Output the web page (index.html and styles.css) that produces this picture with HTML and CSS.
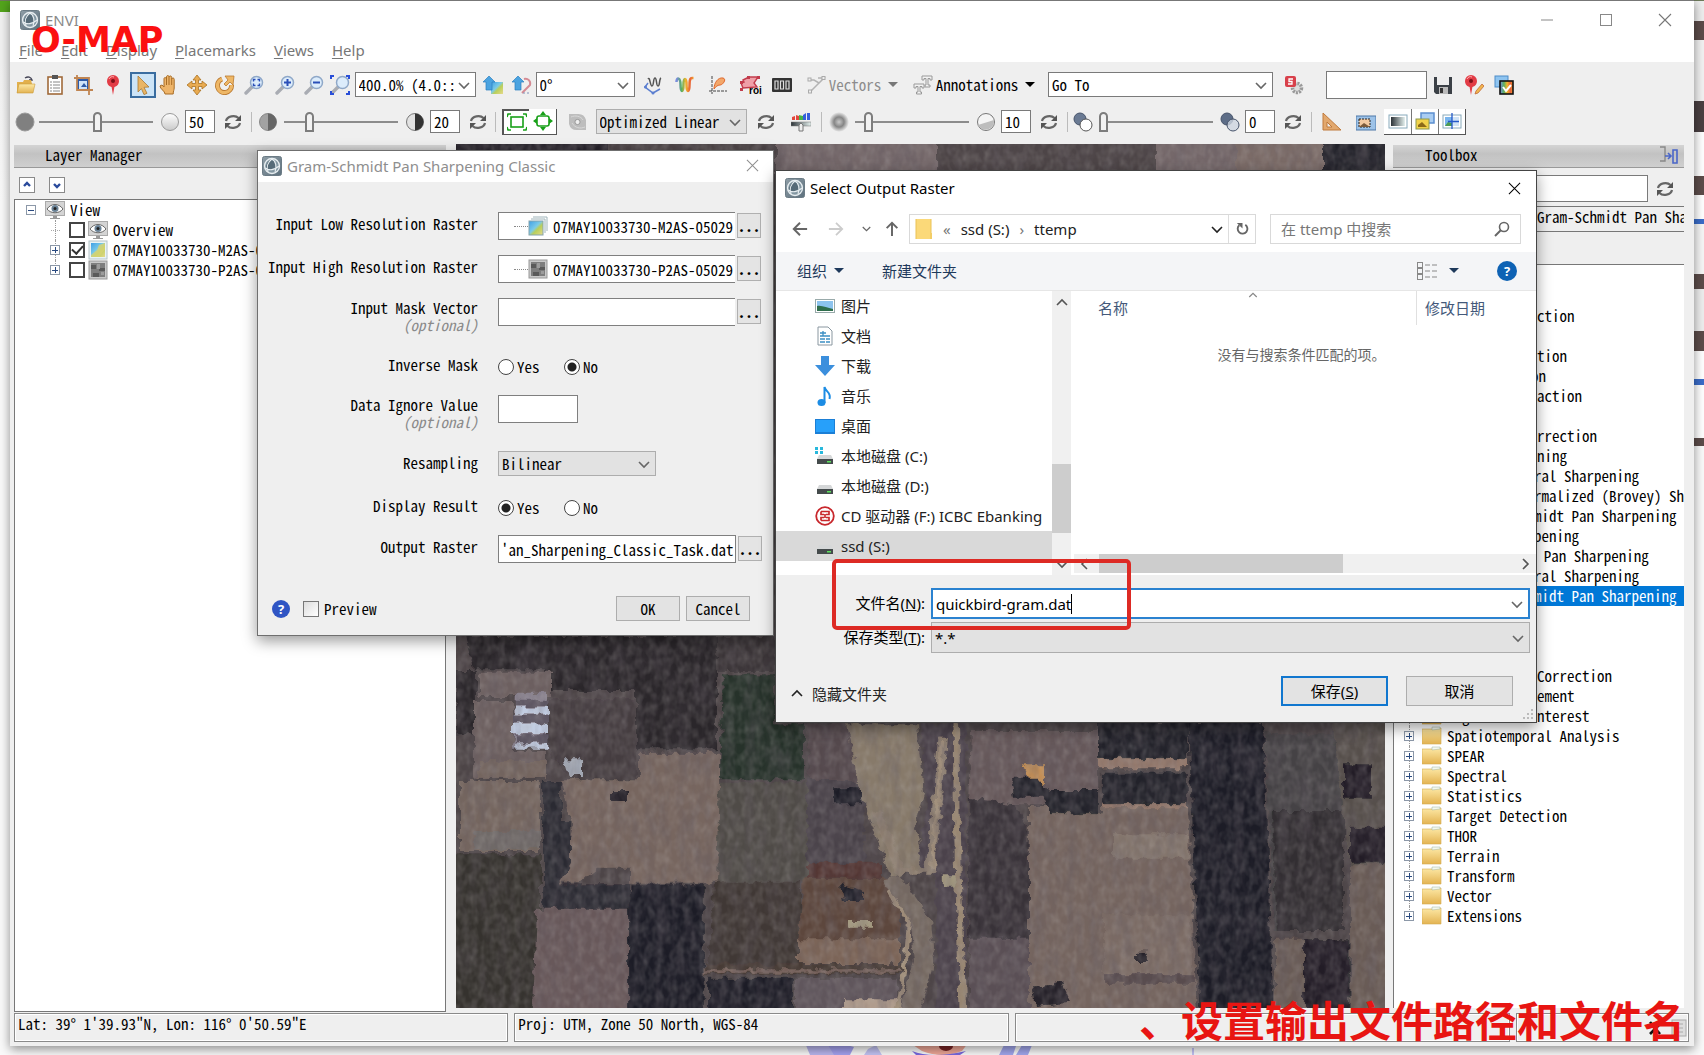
FILE: index.html
```html
<!DOCTYPE html>
<html lang="zh-CN">
<head>
<meta charset="utf-8">
<title>ENVI</title>
<link rel="stylesheet" href="styles.css">
</head>
<body>
<svg class="sprite" aria-hidden="true">
  <defs>
    <linearGradient id="gGlass" x1="0" y1="0" x2="1" y2="1"><stop offset="0" stop-color="#8e9da6"/><stop offset="1" stop-color="#5d707d"/></linearGradient>
    <linearGradient id="gFolder" x1="0" y1="0" x2="0" y2="1"><stop offset="0" stop-color="#fde9a6"/><stop offset="1" stop-color="#e3b352"/></linearGradient>
    <linearGradient id="gSky" x1="0" y1="0" x2="1" y2="1"><stop offset="0" stop-color="#3fa0e6"/><stop offset=".45" stop-color="#7ccbe8"/><stop offset=".6" stop-color="#b9cf5a"/><stop offset="1" stop-color="#e6d98b"/></linearGradient>
    <linearGradient id="gGrey" x1="0" y1="0" x2="1" y2="0"><stop offset="0" stop-color="#2c3338"/><stop offset="1" stop-color="#e4f0ee"/></linearGradient>
    <linearGradient id="gRain" x1="0" y1="0" x2="1" y2="0"><stop offset="0" stop-color="#e33b2e"/><stop offset=".35" stop-color="#f2b52d"/><stop offset=".6" stop-color="#4cb648"/><stop offset="1" stop-color="#2f5fd0"/></linearGradient>
    <linearGradient id="gWave" x1="0" y1="0" x2="1" y2="0"><stop offset="0" stop-color="#7a8ce0"/><stop offset=".3" stop-color="#58b060"/><stop offset=".55" stop-color="#f2b52d"/><stop offset=".8" stop-color="#e8603a"/><stop offset="1" stop-color="#f3a12d"/></linearGradient>
    <radialGradient id="gSoft"><stop offset="0" stop-color="#c9c9c9"/><stop offset=".5" stop-color="#858585"/><stop offset="1" stop-color="#efefef"/></radialGradient>
    <linearGradient id="gBall" x1="0" y1="0" x2="0" y2="1"><stop offset="0" stop-color="#fff"/><stop offset="1" stop-color="#c9c9c9"/></linearGradient>
  </defs>
  <symbol id="logo" viewBox="0 0 20 20"><rect x=".5" y=".5" width="19" height="19" rx="2" fill="url(#gGlass)" stroke="#6b7b85"/><circle cx="10" cy="10" r="7.500" fill="#8397a2" stroke="#e8eef1" stroke-width="1.300"/><path d="M4 12c0-4 2-7 5-8l3 1 2 6c-3 2-7 3-10 1z" fill="#566b78"/><path d="M3 12c4 3 10 2 14-2M10 3c4 2 5 8 3 13M6 16c-2-5 0-10 4-13" fill="none" stroke="#e8eef1" stroke-width="1.100"/></symbol>
  <symbol id="open" viewBox="0 0 20 20"><path d="M9 3c3-2 6-1 7 2l-3 0" fill="none" stroke="#445" stroke-width="1.400"/><path d="M1 7h6l1-2h7l1 4v9H1z" fill="#e2b04c"/><path d="M3 9h16l-2 9H1z" fill="url(#gFolder)" stroke="#c99a3a" stroke-width=".6"/></symbol>
  <symbol id="clip" viewBox="0 0 20 20"><rect x="3" y="2" width="14" height="17" fill="#fff" stroke="#a06a3a" stroke-width="1.600"/><rect x="7" y="0" width="6" height="4" fill="#555"/><path d="M5 7h2M8 7h7M5 10h2M8 10h7M5 13h2M8 13h7M5 16h2M8 16h7" stroke="#888"/></symbol>
  <symbol id="crop" viewBox="0 0 20 20"><rect x="5" y="5" width="10" height="10" fill="#cfe4fb" stroke="#2d5aa8" stroke-width="2"/><path d="M4 0v15h16M1 3h15v17" fill="none" stroke="#c08552" stroke-width="1.800"/><path d="M8 12l3-4 3 4z" fill="#2d5aa8"/></symbol>
  <symbol id="pin" viewBox="0 0 20 20"><path d="M10 20L8.600 12C5 11 4 8 4 6a6 6 0 0 1 12 0c0 2-1 5-4.600 6z" fill="#e23c46"/><circle cx="10" cy="6" r="2" fill="#7c1018"/><path d="M6 4c1-2 3-3 5-2" stroke="#ffb3b3" fill="none"/></symbol>
  <symbol id="cursor" viewBox="0 0 20 20"><path d="M5 1l11 11-5 .3 3 6-3 1.300-2.600-6L5 17z" fill="#e9b565" stroke="#a97a34" stroke-width=".8"/></symbol>
  <symbol id="hand" viewBox="0 0 20 20"><path d="M6 19c0-3-5-5-5-8 1-1.500 3-1 4 1V4c0-2 2-2 2.500 0V2c0-2 2.500-2 2.500 0v0c.3-1.500 2.700-1.500 2.700.5V4c.5-1.500 2.500-1.500 2.500.5V13c0 2-1 3-1 6z" fill="#eeb469" stroke="#a86d26"/><path d="M7.500 4v6M10 2v8M12.700 4v6" stroke="#a86d26"/></symbol>
  <symbol id="move" viewBox="0 0 20 20"><path d="M10 0l4 5h-2.500v3.500H15V6l5 4-5 4v-2.500h-3.500V15H14l-4 5-4-5h2.500v-3.500H5V14l-5-4 5-4v2.500h3.500V5H6z" fill="#e9ab51" stroke="#a97224" stroke-width=".8"/></symbol>
  <symbol id="rotate" viewBox="0 0 20 20"><path d="M7 4A7 7 0 1 0 16.500 10" fill="none" stroke="#b9782f" stroke-width="5"/><path d="M7 4A7 7 0 1 0 16.500 10" fill="none" stroke="#eeb766" stroke-width="3.400"/><path d="M10 1l9 0-1 9-3-3-4 4-2-2 4-4z" fill="#eeb766" stroke="#b9782f" stroke-width=".8"/></symbol>
  <symbol id="lens" viewBox="0 0 20 20"><path d="M8 12l-6 6" stroke="#a9acb3" stroke-width="3.400" stroke-linecap="round"/><circle cx="12.500" cy="7.500" r="6" fill="#dcecfb" stroke="#8fa8c8" stroke-width="1.500"/></symbol>
  <symbol id="zoombox" viewBox="0 0 20 20"><use href="#lens"/><path d="M9.500 6.500v-2h2M13.500 4.500h2v2M15.500 8.500v2h-2M11.500 10.500h-2v-2" fill="none" stroke="#2a4fb8" stroke-width="1.400"/></symbol>
  <symbol id="zoomin" viewBox="0 0 20 20"><use href="#lens"/><path d="M9 7.500h7M12.500 4v7" stroke="#2a4fb8" stroke-width="2"/></symbol>
  <symbol id="zoomout" viewBox="0 0 20 20"><use href="#lens"/><path d="M9 7.500h7" stroke="#2a4fb8" stroke-width="2"/></symbol>
  <symbol id="zoomfit" viewBox="0 0 20 20"><use href="#lens"/><path d="M1 4V1h3M16 1h3v3M19 16v3h-3M4 19H1v-3" fill="none" stroke="#2a4fd8" stroke-width="2"/></symbol>
  <symbol id="upimg" viewBox="0 0 20 20"><rect x="8" y="7" width="12" height="12" fill="url(#gSky)"/><path d="M6 1l6 6H9v8H3V7H0z" fill="#4ba3e0" stroke="#2c7fc0" stroke-width=".7"/></symbol>
  <symbol id="uprot" viewBox="0 0 20 20"><path d="M12 4c4-1 7 2 6 6l-4 4M18 10l-8 8" fill="none" stroke="#d58b94" stroke-width="2"/><path d="M11 18h8" stroke="#7f92b8" stroke-dasharray="2"/><path d="M6 1l6 6H9v8H3V7H0z" fill="#4ba3e0" stroke="#2c7fc0" stroke-width=".7"/></symbol>
  <symbol id="profile" viewBox="0 0 20 20"><path d="M5 8l-3 4 8 6 7-4" fill="none" stroke="#5c7fd0" stroke-width="1.500"/><circle cx="2.500" cy="12" r="1.500" fill="#5c7fd0"/><circle cx="10" cy="18" r="1.500" fill="#5c7fd0"/><path d="M5 4c2-3 2 7 4 7s1-8 3-8 1 8 3 8 1-7 3-8" fill="none" stroke="#555" stroke-width="1.500"/></symbol>
  <symbol id="spectral" viewBox="0 0 20 20"><path d="M1.500 7c0-5 4-5 4 3s3 8 3 0 3-8 3 0 3 8 3 0 2-7 4-7" fill="none" stroke="url(#gWave)" stroke-width="2.500"/></symbol>
  <symbol id="scatter" viewBox="0 0 20 20"><path d="M4 1v18M1 16h18" stroke="#444" stroke-dasharray="3 1"/><path d="M6 14c0-6 4-12 9-11 4 1 0 7-3 7s-4 2-6 4z" fill="#f3a76a" stroke="#e0682c"/></symbol>
  <symbol id="roi" viewBox="0 0 24 20"><path d="M5 5l6-3h9l-4 6 3 4-14 1-2-5 3-1z" fill="#efa0a8" stroke="#c23c4c" stroke-width="1.400"/><g fill="#c23c4c"><rect x="9" y="1" width="3" height="3"/><rect x="19" y="1" width="3" height="3"/><rect x="2" y="13" width="3" height="3"/><rect x="2" y="6" width="3" height="3"/></g><text x="11" y="19" class="roi-text">roi</text></symbol>
  <symbol id="barcode" viewBox="0 0 20 20"><rect x="0" y="3" width="20" height="14" rx="1" fill="#333"/><path d="M3 6h3v8H3zM8.500 6h3v8h-3zM14 6h3v8h-3z" fill="none" stroke="#ddd" stroke-width="1.200"/></symbol>
  <symbol id="vector" viewBox="0 0 20 20"><path d="M4 5h4l5 3 5-5h-6M13 8l-9 9" fill="none" stroke="#b3b3b3" stroke-width="1.500"/><g fill="#eee" stroke="#aaa"><rect x="2" y="3" width="3" height="3"/><rect x="16" y="1.500" width="3" height="3"/><rect x="2.500" y="15" width="3" height="3"/></g></symbol>
  <symbol id="annot" viewBox="0 0 20 20"><g fill="#f2f2f2" stroke="#999"><path d="M9 1h10v4h-2V3.500h-2V10h2v2h-5v-2h1V3.500h-2V5H9z"/><path d="M1 9h10v4H9v-1.500H7V17h1.500v2h-5v-2H5v-5.500H3V13H1z"/></g></symbol>
  <symbol id="sgear" viewBox="0 0 20 20"><circle cx="13" cy="13" r="4.500" fill="#ddd" stroke="#999" stroke-width="3.500" stroke-dasharray="2 1"/><rect x="1" y="1" width="11" height="11" rx="2" fill="#d8404b"/><path d="M9 4H5v2.500h3V9H4" fill="none" stroke="#fff" stroke-width="1.300"/></symbol>
  <symbol id="save" viewBox="0 0 20 20"><path d="M1 2h18v17H3l-2-2z" fill="#3b4046"/><rect x="4" y="2" width="12" height="8" fill="#eee"/><rect x="6" y="12" width="9" height="7" fill="#bbb"/><rect x="7" y="13" width="3" height="5" fill="#333"/></symbol>
  <symbol id="pinedit" viewBox="0 0 20 20"><use href="#pin" x="-3"/><path d="M18 9l-6 7-1 3 3-1 6-7z" fill="#f1b64d" stroke="#c26a3a" stroke-width=".8"/></symbol>
  <symbol id="layers" viewBox="0 0 20 20"><rect x="1" y="1" width="13" height="11" fill="#8ec4f0" stroke="#4d8cc8"/><rect x="6" y="6" width="13" height="13" fill="url(#gWave)" stroke="#111" stroke-width="1.600"/><path d="M9 12l3 4 5-6" stroke="#fff" stroke-width="2" fill="none"/></symbol>
  <symbol id="refresh" viewBox="0 0 20 20"><path d="M3 9c1-5 9-6.500 12.500-3M17 11c-1 5-9 6.500-12.500 3" fill="none" stroke="#666" stroke-width="2.200"/><path d="M18 3v6h-6zM2 17v-6h6z" fill="#555"/></symbol>
  <symbol id="dark" viewBox="0 0 20 20"><circle cx="10" cy="10" r="9" fill="#808080" stroke="#9a9a9a"/></symbol>
  <symbol id="light" viewBox="0 0 20 20"><circle cx="10" cy="10" r="8.500" fill="url(#gBall)" stroke="#999"/></symbol>
  <symbol id="half1" viewBox="0 0 20 20"><circle cx="10" cy="10" r="8.500" fill="#a2a2a2" stroke="#888"/><path d="M10 1.500a8.500 8.500 0 0 1 0 17z" fill="#666"/></symbol>
  <symbol id="half2" viewBox="0 0 20 20"><circle cx="10" cy="10" r="8.500" fill="#e2e2e2" stroke="#777"/><path d="M10 1.500a8.500 8.500 0 0 1 0 17z" fill="#333"/></symbol>
  <symbol id="soft" viewBox="0 0 20 20"><circle cx="10" cy="10" r="10" fill="url(#gSoft)"/></symbol>
  <symbol id="sharp" viewBox="0 0 20 20"><circle cx="10" cy="10" r="8.500" fill="#f4f4f4" stroke="#777"/><path d="M2 13L18 8a8.500 8.500 0 0 1-16 5z" fill="#bdbdbd"/></symbol>
  <symbol id="trans1" viewBox="0 0 20 20"><circle cx="7" cy="7" r="6" fill="#6a7a93" stroke="#46536a"/><circle cx="13" cy="13" r="6" fill="#fff" stroke="#555"/></symbol>
  <symbol id="trans2" viewBox="0 0 20 20"><circle cx="7" cy="7" r="6" fill="#5d6d87" stroke="#46536a"/><circle cx="13" cy="13" r="6" fill="#cdd5e0" fill-opacity=".8" stroke="#46536a"/></symbol>
  <symbol id="ext1" viewBox="0 0 20 20"><rect x="4" y="5" width="12" height="10" fill="none" stroke="#18a018" stroke-width="1.600"/><path d="M0 5l1-3h3M16 2h3l1 3M20 15l-1 3h-3M4 18H1l-1-3" fill="none" stroke="#18a018" stroke-width="1.600"/></symbol>
  <symbol id="ext2" viewBox="0 0 20 20"><rect x="4" y="5" width="12" height="10" rx="2" fill="none" stroke="#18a018" stroke-width="1.600"/><path d="M10 0l3 4H7zM10 20l3-4H7zM0 10l4-3v6zM20 10l-4-3v6z" fill="#18a018"/></symbol>
  <symbol id="disc" viewBox="0 0 20 20"><path d="M1 2h9a8 8 0 0 1 8 6v10h-9a8 8 0 0 1-8-6z" fill="#bdbdbd"/><path d="M3 5c4-2 10-1 12 3M17 15c-5 2-10 1-13-4" fill="none" stroke="#d8d8d8"/><circle cx="9.500" cy="10" r="2.600" fill="#eee" stroke="#999"/></symbol>
  <symbol id="hist" viewBox="0 0 20 20"><path d="M1 8V5l3-1v4zM5 8V3l3 1v4z" fill="#e2463c"/><path d="M8 8V3l4 1v4z" fill="#45b348"/><path d="M12 8V3l3-2v7zM16 8V1h3v7z" fill="#365fdc"/><rect x="0" y="10" width="20" height="4" fill="url(#gGrey)" stroke="#777" stroke-width=".5"/><path d="M8 13l2-2 2 2v6H8z" fill="#eee" stroke="#777"/></symbol>
  <symbol id="ruler" viewBox="0 0 20 20"><path d="M1 1l18 17H1z" fill="#e2a86e" stroke="#c07a3c"/><path d="M5 10l5 5H5z" fill="#efefef" stroke="#c07a3c"/></symbol>
  <symbol id="window" viewBox="0 0 20 20"><rect x="0" y="4" width="20" height="14" fill="#9cc2e8" stroke="#4f78a8"/><rect x="3" y="7" width="11" height="8" fill="#f3c9a0" stroke="#222" stroke-dasharray="2 1"/><path d="M3 15l5-4 6 4z" fill="#7c5a3a"/></symbol>
  <symbol id="blend" viewBox="0 0 20 20"><rect x="1" y="4" width="18" height="13" fill="#fff" stroke="#8ab"/><rect x="3" y="6" width="14" height="9" fill="url(#gGrey)"/></symbol>
  <symbol id="flicker" viewBox="0 0 20 20"><rect x="6" y="2" width="13" height="10" fill="#a9cdf3" stroke="#5c8fd0" stroke-width="1.500"/><rect x="1" y="8" width="13" height="10" fill="#f2d24a" stroke="#8c9a50"/><path d="M3 14l4-3 5 5H3z" fill="#8c6a18"/></symbol>
  <symbol id="swipe" viewBox="0 0 20 20"><rect x="1" y="4" width="18" height="13" fill="#fff" stroke="#8ab"/><rect x="3" y="6" width="7" height="9" fill="#79b5ee"/><path d="M3 15l3-4 4 1v3z" fill="#4c9b51"/><rect x="10" y="6" width="7" height="9" fill="#cfe2f5"/><path d="M10 2v16M6 10.500h11" stroke="#2458c8" stroke-width="1.300"/></symbol>
  <symbol id="eye" viewBox="0 0 20 20"><rect x=".5" y="1.500" width="19" height="14" fill="#d4d4d4" stroke="#aaa"/><path d="M2 9c4-6 12-6 16 0-4 5-12 5-16 0z" fill="#fff" stroke="#666"/><circle cx="10" cy="8.500" r="3.500" fill="#6a8296"/><circle cx="10" cy="8.500" r="1.500" fill="#222"/><path d="M8 16h4v2h3v1H5v-1h3z" fill="#999"/></symbol>
  <symbol id="rast" viewBox="0 0 20 20"><rect x="1" y="1" width="18" height="18" fill="#e9f3f5" stroke="#b5c4c8"/><rect x="3" y="3" width="14" height="14" fill="url(#gSky)"/><path d="M3 15l6-5 2-5 6-2v6l-6 8H3z" fill="#d7d374" opacity=".8"/></symbol>
  <symbol id="rasts" viewBox="0 0 20 20"><path d="M5 1h14v14M3 3h14v14" fill="none" stroke="#9fb4ba"/><rect x="1" y="5" width="14" height="14" fill="url(#gSky)" stroke="#86a4ad"/></symbol>
  <symbol id="grast" viewBox="0 0 20 20"><rect x="1" y="1" width="18" height="18" fill="#c9c9c9" stroke="#999"/><rect x="3" y="3" width="14" height="14" fill="#7e7e7e"/><path d="M3 5h5v4H3zM11 8h6v3h-6zM5 13h6v4H5z" fill="#5a5a5a"/><path d="M9 4h3v5H9zM13 12h3v3h-3z" fill="#9c9c9c"/></symbol>
  <symbol id="folder" viewBox="0 0 20 20"><path d="M0 3h11l1-1h7v16H0z" fill="url(#gFolder)" stroke="#d5ac52" stroke-width=".6"/><path d="M10 1h8v2l-8 1z" fill="#f4f8ee" stroke="#9fb2a2" stroke-width=".5"/></symbol>
  <symbol id="chev" viewBox="0 0 12 12"><path d="M1 4l5 5 5-5" fill="none" stroke="currentColor" stroke-width="1.600"/></symbol>
  <symbol id="cross" viewBox="0 0 14 14"><path d="M1 1l12 12M13 1L1 13" stroke="currentColor" stroke-width="1.100"/></symbol>
  <symbol id="arrow" viewBox="0 0 18 18"><path d="M17 9H2M9 2L2 9l7 7" fill="none" stroke="currentColor" stroke-width="2.200"/></symbol>
  <symbol id="arrowr" viewBox="0 0 18 18"><path d="M1 9h15M9 2l7 7-7 7" fill="none" stroke="currentColor" stroke-width="2"/></symbol>
  <symbol id="arrowu" viewBox="0 0 18 18"><path d="M9 17V2M3 8l6-6 6 6" fill="none" stroke="currentColor" stroke-width="2.200"/></symbol>
  <symbol id="drive" viewBox="0 0 20 20"><path d="M4 9h12l2 4H2z" fill="#d5d7d8"/><rect x="2" y="13" width="16" height="5" fill="#454b4c"/><rect x="12" y="15" width="4" height="1.500" fill="#5de05d"/></symbol>
</svg>

<div class="desktop" aria-hidden="true">
  <div class="peek"></div>
  <svg class="doodle" viewBox="0 0 400 12"><path d="M5 0h28l12 12H10z" fill="#b9b6ee"/><path d="M28 2l12-2 14 4-4 8H34z" fill="#a5a2f0"/><path d="M68 6l8-4 6 10H64z" fill="#c4c4f4"/><path d="M110 0h58l-6 8q-20 8-40 0z" fill="#f0a898"/><ellipse cx="146" cy="3" rx="7" ry="5" fill="#7a2424"/><path d="M112 8q20 8 54 0l-6 4h-44z" fill="#7a6ae0"/><path d="M205 0h12l-4 12h-14zM222 2h10l-4 10h-12z" fill="#a3a8ee"/><path d="M393 5v7" stroke="#8a8af0"/></svg>
</div>

<main class="app">
  <header class="titlebar">
    <svg class="i20"><use href="#logo"/></svg><span class="title">ENVI</span>
    <div class="winbtns">
      <button aria-label="Minimize"><svg viewBox="0 0 14 14"><path d="M1 7h12" stroke="#888"/></svg></button>
      <button aria-label="Maximize"><svg viewBox="0 0 14 14"><rect x="1.500" y="1.500" width="11" height="11" fill="none" stroke="#888"/></svg></button>
      <button aria-label="Close window"><svg><use href="#cross"/></svg></button>
    </div>
  </header>
  <nav class="menu">
    <a href="#file"><u>F</u>ile</a><a href="#edit"><u>E</u>dit</a><a href="#display"><u>D</u>isplay</a><a href="#placemarks"><u>P</u>lacemarks</a><a href="#views"><u>V</u>iews</a><a href="#help"><u>H</u>elp</a>
  </nav>

  <section class="bars">
    <div class="bar bar1">
      <button aria-label="Open"><svg><use href="#open"/></svg></button>
      <button aria-label="Data Manager"><svg><use href="#clip"/></svg></button>
      <button aria-label="Crop"><svg><use href="#crop"/></svg></button>
      <button aria-label="Placemark"><svg><use href="#pin"/></svg></button>
      <button aria-label="Select" class="active"><svg><use href="#cursor"/></svg></button>
      <button aria-label="Pan"><svg><use href="#hand"/></svg></button>
      <button aria-label="Fly"><svg><use href="#move"/></svg></button>
      <button aria-label="Rotate"><svg><use href="#rotate"/></svg></button>
      <button aria-label="Zoom"><svg><use href="#zoombox"/></svg></button>
      <button aria-label="Zoom in"><svg><use href="#zoomin"/></svg></button>
      <button aria-label="Zoom out"><svg><use href="#zoomout"/></svg></button>
      <button aria-label="Zoom to full extent"><svg><use href="#zoomfit"/></svg></button>
      <span class="combo w-zoom"><select aria-label="Zoom factor"><option>400.0% (4.0::</option></select><svg><use href="#chev"/></svg></span>
      <button aria-label="North up"><svg><use href="#upimg"/></svg></button>
      <button aria-label="Rotate up"><svg><use href="#uprot"/></svg></button>
      <span class="combo w-rot"><select aria-label="Rotation"><option>0°</option></select><svg><use href="#chev"/></svg></span>
      <button aria-label="Arbitrary profile"><svg><use href="#profile"/></svg></button>
      <button aria-label="Spectral profile"><svg><use href="#spectral"/></svg></button>
      <button aria-label="Scatter plot"><svg><use href="#scatter"/></svg></button>
      <button aria-label="Region of interest"><svg class="wide"><use href="#roi"/></svg></button>
      <button aria-label="Feature counting"><svg><use href="#barcode"/></svg></button>
      <button class="drop off"><svg><use href="#vector"/></svg>Vectors<i></i></button>
      <button class="drop"><svg><use href="#annot"/></svg>Annotations<i></i></button>
      <span class="combo w-goto"><select aria-label="Go To"><option>Go To</option></select><svg><use href="#chev"/></svg></span>
      <button aria-label="Settings"><svg><use href="#sgear"/></svg></button>
      <input class="name" type="text" aria-label="Name">
      <button aria-label="Save"><svg><use href="#save"/></svg></button>
      <button aria-label="Edit placemark"><svg><use href="#pinedit"/></svg></button>
      <button aria-label="Chip view"><svg><use href="#layers"/></svg></button>
    </div>
    <div class="bar bar2">
      <svg><use href="#dark"/></svg><input type="range" value="51" aria-label="Brightness"><svg><use href="#light"/></svg><input class="num" type="text" value="50" aria-label="Brightness value">
      <button aria-label="Reset brightness"><svg><use href="#refresh"/></svg></button><hr>
      <svg><use href="#half1"/></svg><input type="range" value="20" aria-label="Contrast"><svg><use href="#half2"/></svg><input class="num" type="text" value="20" aria-label="Contrast value">
      <button aria-label="Reset contrast"><svg><use href="#refresh"/></svg></button><hr>
      <span class="group two"><button aria-label="Full extent"><svg><use href="#ext1"/></svg></button><button aria-label="View extent"><svg><use href="#ext2"/></svg></button></span>
      <svg><use href="#disc"/></svg>
      <span class="combo grey w-stretch"><select aria-label="Stretch"><option>Optimized Linear</option></select><svg><use href="#chev"/></svg></span>
      <button aria-label="Reset stretch"><svg><use href="#refresh"/></svg></button>
      <button aria-label="Custom stretch"><svg><use href="#hist"/></svg></button><hr>
      <svg><use href="#soft"/></svg><input type="range" value="9" aria-label="Sharpen"><svg><use href="#sharp"/></svg><input class="num" type="text" value="10" aria-label="Sharpen value">
      <button aria-label="Reset sharpen"><svg><use href="#refresh"/></svg></button><hr>
      <svg><use href="#trans1"/></svg><input type="range" value="0" aria-label="Transparency"><svg><use href="#trans2"/></svg><input class="num" type="text" value="0" aria-label="Transparency value">
      <button aria-label="Reset transparency"><svg><use href="#refresh"/></svg></button><hr>
      <button aria-label="Measure"><svg><use href="#ruler"/></svg></button>
      <button aria-label="Portal"><svg><use href="#window"/></svg></button>
      <span class="group three"><button aria-label="Blend"><svg><use href="#blend"/></svg></button><button aria-label="Flicker"><svg><use href="#flicker"/></svg></button><button aria-label="Swipe"><svg><use href="#swipe"/></svg></button></span>
    </div>
  </section>

  <div class="work">
    <section class="layers">
      <h2 class="panelhead">Layer Manager</h2>
      <div class="updown">
        <button aria-label="Collapse all"><svg viewBox="0 0 12 12"><path d="M3 7l3-3 3 3" fill="none" stroke="#2a4a9c" stroke-width="2.400"/></svg></button>
        <button aria-label="Expand all"><svg viewBox="0 0 12 12"><path d="M3 5l3 3 3-3" fill="none" stroke="#2a4a9c" stroke-width="2.400"/></svg></button>
      </div>
      <ul class="tree layertree">
        <li><b class="ex minus"></b><svg><use href="#eye"/></svg>View</li>
        <li class="sub"><b class="ex none"></b><label><input type="checkbox"><svg><use href="#eye"/></svg>Overview</label></li>
        <li class="sub"><b class="ex"></b><label><input type="checkbox" checked><svg><use href="#rast"/></svg>07MAY10033730-M2AS-05029</label></li>
        <li class="sub last"><b class="ex"></b><label><input type="checkbox"><svg><use href="#grast"/></svg>07MAY10033730-P2AS-05029</label></li>
      </ul>
    </section>

    <section class="map" aria-label="Map view">
      <svg viewBox="0 0 929 864" preserveAspectRatio="xMidYMid slice">
        <defs>
          <filter id="rough" x="0" y="0" width="100%" height="100%" filterUnits="userSpaceOnUse"><feTurbulence type="fractalNoise" baseFrequency=".12" numOctaves="2" seed="4"/><feDisplacementMap in="SourceGraphic" scale="9" xChannelSelector="R" yChannelSelector="G"/></filter>
          <filter id="grain" x="0" y="0" width="100%" height="100%"><feTurbulence type="fractalNoise" baseFrequency=".14 .1" numOctaves="2" seed="7"/><feColorMatrix values=".5 0 0 0 .2  .5 0 0 0 .17  .5 0 0 0 .16  0 1.500 0 0 -.5"/></filter>
          <filter id="grain2" x="0" y="0" width="100%" height="100%"><feTurbulence type="fractalNoise" baseFrequency=".09 .03" numOctaves="3" seed="23"/><feColorMatrix values="0 0 0 0 .12  0 0 0 0 .1  0 0 0 0 .12  0 0 1.800 0 -.7"/></filter>
        </defs>
        <g filter="url(#rough)">
        <rect x="-20" y="-20" width="970" height="910" fill="#4d4447"/>
        <path fill="#26242c" d="M-10-10h162v40H-10z"/><path fill="#75686a" d="M320-10h160v40H320zM700-10h80v40h-80z"/><path fill="#7c6c67" d="M780-10h87v40h-87z"/><path fill="#232229" d="M867-10h72v40h-72z"/>
        <g transform="translate(-6 487) scale(.6 .3333)">
          <path fill="#2a272c" d="M25 15h420v340H310V180H160v-65H40zM10 120h35v190H10z"/>
          <path fill="#6d6060" d="M50 125h120v70H50zM40 210h65v230H40zM65 360h95v80H60z"/>
          <path fill="#453c41" d="M165 205h145v250H200l-40-110z"/>
          <path fill="#8a8390" d="M110 185h50v165h-55z"/><path fill="#c2cde2" d="M110 230h55v20h-55zM105 278h60v28h-60zM112 338h50v15h-50z"/><path fill="#5d5664" d="M108 206h56v22h-56zM105 252h60v24h-60zM110 310h54v26h-54z"/>
          <path fill="#28302b" d="M455 130h87v150h48v165H450z"/><path fill="#3a3438" d="M445 15h97v105h-97z"/>
          <path fill="#75665f" d="M15 450h135v210H15zM50 390h110v50H50z"/>
          <path fill="#77665f" d="M315 365h135v390H300v-45h-55l-30 45h-35l25-160-20-150h130z"/><path fill="#6f6b68" d="M40 600h110v55H40z"/>
          <path fill="#35302f" d="M0 670h150v480H0z"/><path fill="#2c2930" d="M155 450h30v120h15v130l-20 60h120v75H155z"/><path fill="#a3a9b5" d="M190 385h30v50h-22z"/>
          <path fill="#67595a" d="M145 833h152v320H138z"/><path fill="#1f1f27" d="M303 760h120v390H297V830z"/>
          <path fill="#504c47" d="M450 455h145v300H445z"/><path fill="#403835" d="M440 755h145v260H430z"/><path fill="#48424a" d="M595 450h95v250h-95z"/>
          <path fill="#5d473d" d="M590 740h160v200H580z"/><path fill="#523430" d="M595 695h125v45H595z"/><path fill="#7b6559" d="M580 925h170v75H580z"/><path fill="#463a36" d="M425 1000h330v30H425z"/><path fill="#75615a" d="M425 1015h325v10H425z"/><path fill="#1e1e26" d="M430 1040h142v110H430z"/><path fill="#60565c" d="M575 1040h170v110H575z"/><path fill="#b09c8c" d="M655 1105h90v45h-90z"/>
          <path fill="#877a6b" d="M660 280h120l10 210-15 100 20 120-60 30-30-150-40-200z"/><path fill="#554a4e" d="M595 280h65l20 170H600z"/>
          <path fill="#1e1d25" d="M640 475h45v42h-45zM650 760l40 20v30h-35z"/>
          <path fill="#4c434c" d="M785 280h75v870h-50V740l-30-40 15-200z"/>
          <g fill="none" stroke-linejoin="round"><path stroke="#8e7f70" stroke-width="16" d="M710 540l40 180h50l22-400"/><path stroke="#766a62" stroke-width="34" d="M735 740l50 130 5 120-25 160"/><path stroke="#a18f7a" stroke-width="7" d="M730 780l35 90-5 120-15 160M820 330l-15 380"/><path stroke="#9a8873" stroke-width="11" d="M843 280l4 430 8 440"/></g>
          <path fill="#66595a" d="M870 300h210v220H865z"/><path fill="#c48f55" d="M955 400h35v60h-20z"/><path fill="#222129" d="M935 440h45l20 40h80v65h-80l-10-45h-50zM1080 270h150v110h-150zM1088 425h140v93h-140z"/><path fill="#92776b" d="M1080 382h150v30h-150zM1085 520h145v18h-145z"/>
          <path fill="#393039" d="M865 500l75 20 22 60 8 340H862z"/><path fill="#5a4f55" d="M865 920h100v230H865z"/>
          <path fill="#75655e" d="M965 525h35v22h85v-15h145l15 618H965z"/><path fill="#84766d" d="M1105 610h125v70h-125z"/><path fill="#7c6c65" d="M1090 850h145v180h-145z"/><path fill="#594b4e" d="M1090 1030h150v28h-150z"/>
          <path fill="#1f1f27" d="M1230 270h125l18 880h-122z"/><path fill="#444344" d="M1358 310h130v590h-115z"/><path fill="#312f31" d="M1370 540h120v360h-112z"/>
          <path fill="#57504b" d="M1470 270h110v440h-80z"/><path fill="#201f25" d="M1490 400h45v100h-45zM1500 590h70v105h-70zM1423 925h75v225h-75z"/><path fill="#6b5b56" d="M1500 700h80v450h-80zM1375 920h48v230h-48z"/>
          <path fill="#25232b" d="M970 1070l50-15 15 60-60 10zM1145 965h18v25h-18zM270 480h25v30h-25z"/><path fill="#a49a80" d="M665 870h40v20h-40zM823 730h20v40h-20z"/>
        </g>
        </g>
        <rect width="929" height="864" filter="url(#grain)" opacity=".3"/><rect width="929" height="864" filter="url(#grain2)" opacity=".4"/>
      </svg>
    </section>

    <section class="toolbox">
      <h2 class="panelhead">Toolbox<svg viewBox="0 0 20 20"><path d="M2 2h5v14H2" fill="none" stroke="#888" stroke-width="1.400"/><path d="M7 11h6M10 8l3 3-3 3M15 5h4v13h-4z" fill="none" stroke="#4a66c8" stroke-width="1.600"/></svg></h2>
      <div class="find"><input type="text" aria-label="Search toolbox"><button aria-label="Refresh"><svg><use href="#refresh"/></svg></button></div>
      <div class="recent">Color Normalized, Gram-Schmidt Pan Sharpening</div>
      <ul class="tree tooltree">
        <li><b class="ex"></b><svg><use href="#folder"/></svg>Favorites</li>
        <li><b class="ex"></b><svg><use href="#folder"/></svg>SARscape</li>
        <li><b class="ex"></b><svg><use href="#folder"/></svg>Anomaly Detection</li>
        <li><b class="ex"></b><svg><use href="#folder"/></svg>Band Algebra</li>
        <li><b class="ex"></b><svg><use href="#folder"/></svg>Change Detection</li>
        <li><b class="ex"></b><svg><use href="#folder"/></svg>Classification</li>
        <li><b class="ex"></b><svg><use href="#folder"/></svg>Feature Extraction</li>
        <li><b class="ex"></b><svg><use href="#folder"/></svg>Filter</li>
        <li><b class="ex"></b><svg><use href="#folder"/></svg>Geometric Correction</li>
        <li><b class="ex minus"></b><svg><use href="#folder"/></svg>Image Sharpening</li>
        <li class="leaf">CN Spectral Sharpening</li>
        <li class="leaf">Color Normalized (Brovey) Sharpening</li>
        <li class="leaf">Gram-Schmidt Pan Sharpening</li>
        <li class="leaf">HSV Sharpening</li>
        <li class="leaf">NNDiffuse Pan Sharpening</li>
        <li class="leaf">PC Spectral Sharpening</li>
        <li class="leaf sel">Gram-Schmidt Pan Sharpening Classic</li>
        <li><b class="ex"></b><svg><use href="#folder"/></svg>LiDAR</li>
        <li><b class="ex"></b><svg><use href="#folder"/></svg>Mosaicking</li>
        <li><b class="ex"></b><svg><use href="#folder"/></svg>Radar</li>
        <li><b class="ex"></b><svg><use href="#folder"/></svg>Radiometric Correction</li>
        <li><b class="ex"></b><svg><use href="#folder"/></svg>Raster Management</li>
        <li><b class="ex"></b><svg><use href="#folder"/></svg>Regions of Interest</li>
        <li><b class="ex"></b><svg><use href="#folder"/></svg>Spatiotemporal Analysis</li>
        <li><b class="ex"></b><svg><use href="#folder"/></svg>SPEAR</li>
        <li><b class="ex"></b><svg><use href="#folder"/></svg>Spectral</li>
        <li><b class="ex"></b><svg><use href="#folder"/></svg>Statistics</li>
        <li><b class="ex"></b><svg><use href="#folder"/></svg>Target Detection</li>
        <li><b class="ex"></b><svg><use href="#folder"/></svg>THOR</li>
        <li><b class="ex"></b><svg><use href="#folder"/></svg>Terrain</li>
        <li><b class="ex"></b><svg><use href="#folder"/></svg>Transform</li>
        <li><b class="ex"></b><svg><use href="#folder"/></svg>Vector</li>
        <li class="last"><b class="ex"></b><svg><use href="#folder"/></svg>Extensions</li>
      </ul>
    </section>
  </div>

  <footer class="status">
    <div>Lat: 39° 1'39.93"N, Lon: 116° 0'50.59"E</div>
    <div>Proj: UTM, Zone 50 North, WGS-84</div>
    <div></div>
    <div class="tray"><svg viewBox="0 0 40 20"><path d="M2 4l10 12M14 4L2 16" stroke="#111" stroke-width="2.600"/><rect x="24" y="2" width="14" height="16" fill="#ddd" stroke="#aaa"/><path d="M27 6h8M27 10h8M27 14h8" stroke="#aaa"/></svg></div>
  </footer>
</main>

<form class="dialog gram" onsubmit="return false">
  <header class="dtitle"><svg class="i20"><use href="#logo"/></svg><span>Gram-Schmidt Pan Sharpening Classic</span><button type="button" class="x" aria-label="Close"><svg><use href="#cross"/></svg></button></header>
  <div class="fields">
    <label for="low">Input Low Resolution Raster</label>
    <div class="pick"><span class="box"><i class="dots"></i><svg><use href="#rasts"/></svg><input id="low" type="text" value="07MAY10033730-M2AS-05029"></span><button type="button">...</button></div>
    <label for="high">Input High Resolution Raster</label>
    <div class="pick"><span class="box"><i class="dots"></i><svg><use href="#grast"/></svg><input id="high" type="text" value="07MAY10033730-P2AS-05029"></span><button type="button">...</button></div>
    <label for="mask" class="two-line">Input Mask Vector<em>(optional)</em></label>
    <div class="pick"><span class="box"><input id="mask" type="text"></span><button type="button">...</button></div>
    <span class="lab">Inverse Mask</span>
    <div class="radios"><label><input type="radio" name="inv">Yes</label><label><input type="radio" name="inv" checked>No</label></div>
    <label for="ign" class="two-line">Data Ignore Value<em>(optional)</em></label>
    <div class="pick"><span class="box small"><input id="ign" type="text"></span></div>
    <label for="res">Resampling</label>
    <span class="combo grey w-res"><select id="res"><option>Bilinear</option></select><svg><use href="#chev"/></svg></span>
    <span class="lab">Display Result</span>
    <div class="radios"><label><input type="radio" name="disp" checked>Yes</label><label><input type="radio" name="disp">No</label></div>
    <label for="out">Output Raster</label>
    <div class="pick"><span class="box full"><input id="out" type="text" value="'an_Sharpening_Classic_Task.dat"></span><button type="button">...</button></div>
  </div>
  <footer class="dfoot">
    <button type="button" class="help" aria-label="Help">?</button>
    <label><input type="checkbox">Preview</label>
    <span class="grow"></span>
    <button type="button" class="btn">OK</button><button type="button" class="btn">Cancel</button>
  </footer>
</form>

<form class="dialog saveas" onsubmit="return false">
  <header class="dtitle"><svg class="i20"><use href="#logo"/></svg><span>Select Output Raster</span><button type="button" class="x" aria-label="Close"><svg><use href="#cross"/></svg></button></header>
  <div class="navrow">
    <button type="button" aria-label="Back"><svg class="i16"><use href="#arrow"/></svg></button>
    <button type="button" class="dim" aria-label="Forward"><svg class="i16"><use href="#arrowr"/></svg></button>
    <button type="button" class="narrow" aria-label="Recent"><svg class="i8"><use href="#chev"/></svg></button>
    <button type="button" aria-label="Up"><svg class="i16"><use href="#arrowu"/></svg></button>
    <div class="address"><svg class="fold" viewBox="0 0 18 20"><path d="M1 0h15v14h1v6H1z" fill="#fbd979"/><path d="M16 0v20M1 0v20" stroke="#eac257"/></svg><span class="sep">«</span><span>ssd (S:)</span><span class="sep">›</span><span>ttemp</span><span class="grow"></span><button type="button" class="narrow" aria-label="History"><svg class="i12"><use href="#chev"/></svg></button><button type="button" class="re" aria-label="Refresh folder"><svg viewBox="0 0 16 16"><path d="M11 4A5.200 5.200 0 1 1 4.500 4.500" fill="none" stroke="#666" stroke-width="2"/><path d="M2 2h6v6z" fill="#666"/></svg></button></div>
    <div class="search"><input type="text" placeholder="在 ttemp 中搜索" aria-label="搜索"><svg viewBox="0 0 16 16"><circle cx="10" cy="6" r="4.500" fill="none" stroke="#666" stroke-width="1.600"/><path d="M7 9l-6 6" stroke="#666" stroke-width="2"/></svg></div>
  </div>
  <div class="cmds">
    <button type="button">组织<i></i></button><button type="button">新建文件夹</button><span class="grow"></span>
    <button type="button" aria-label="View"><svg class="vw" viewBox="0 0 20 18"><g fill="none" stroke="#888"><rect x=".5" y=".5" width="5" height="5"/><rect x=".5" y="6.500" width="5" height="5"/><rect x=".5" y="12.500" width="5" height="5"/><path d="M8 3h5M15 3h5M8 9h5M15 9h5M8 15h5M15 15h5"/></g></svg><i></i></button>
    <button type="button" class="help blue" aria-label="帮助">?</button>
  </div>
  <div class="browse">
    <ul class="places">
      <li><svg viewBox="0 0 20 20"><rect x=".5" y="3.500" width="19" height="13" fill="#fff" stroke="#9aa"/><rect x="2" y="5" width="16" height="10" fill="#8cc3ee"/><path d="M2 10c5-1 10 2 16 3v2H2z" fill="#2f6e4c"/></svg>图片</li>
      <li><svg viewBox="0 0 20 20"><path d="M3 1h10l4 4v14H3z" fill="#fff" stroke="#8a97a0"/><path d="M5 7h6M5 10h10M5 13h5M11 13h4M5 16h5M11 16h4M8 5v5" stroke="#3b8fc4" stroke-width="1.300"/></svg>文档</li>
      <li><svg viewBox="0 0 20 20"><path d="M6 0h8v9h6L10 20 0 9h6z" fill="#3b8fdd"/></svg>下载</li>
      <li><svg viewBox="0 0 20 20"><ellipse cx="6.500" cy="16.500" rx="4" ry="3.500" fill="#1c8ce4"/><path d="M9.500 17V1c1 5 7 5 5 12" fill="none" stroke="#1c8ce4" stroke-width="2"/></svg>音乐</li>
      <li><svg viewBox="0 0 20 20"><rect x="0" y="3" width="20" height="15" fill="#1b7fd6"/><rect x="1" y="4" width="18" height="12" fill="#27a0fa"/></svg>桌面</li>
      <li><svg viewBox="0 0 20 20"><use href="#drive"/><path d="M0 1h3v3H0zM5 1h3v3H5zM0 5h3v3H0zM5 5h3v3H5z" fill="#28b8dc"/></svg>本地磁盘 (C:)</li>
      <li><svg><use href="#drive"/></svg>本地磁盘 (D:)</li>
      <li><svg viewBox="0 0 20 20"><circle cx="10" cy="10" r="8.800" fill="#fff" stroke="#c8282d" stroke-width="1.800"/><path d="M6 5.500h8v3h-3M6 5.500v3h3M6 14.500h8v-3h-3M6 14.500v-3h3M10 8v4" fill="none" stroke="#c8282d" stroke-width="1.700"/></svg>CD 驱动器 (F:) ICBC Ebanking</li>
      <li class="cur"><svg><use href="#drive"/></svg>ssd (S:)</li>
    </ul>
    <div class="vscroll"><svg class="i12 flip"><use href="#chev"/></svg><span class="thumb"></span><svg class="i12"><use href="#chev"/></svg></div>
    <div class="files">
      <div class="cols"><span>名称</span><svg class="i12 flip"><use href="#chev"/></svg><span class="date">修改日期</span></div>
      <p>没有与搜索条件匹配的项。</p>
      <div class="hscroll"><svg class="i12 left"><use href="#chev"/></svg><span class="thumb"></span><svg class="i12 right"><use href="#chev"/></svg></div>
    </div>
  </div>
  <div class="names">
    <label for="fn">文件名(<u>N</u>):</label><span class="combo edit"><input id="fn" type="text" value="quickbird-gram.dat"><i class="caret"></i><svg><use href="#chev"/></svg></span>
    <label for="ft">保存类型(<u>T</u>):</label><span class="combo grey"><select id="ft"><option>*.*</option></select><svg><use href="#chev"/></svg></span>
  </div>
  <footer class="sfoot">
    <button type="button" class="hide"><svg class="i12 flip"><use href="#chev"/></svg>隐藏文件夹</button><span class="grow"></span>
    <button type="button" class="btn primary">保存(<u>S</u>)</button><button type="button" class="btn">取消</button>
  </footer>
  <svg class="grip" viewBox="0 0 12 12"><path d="M9 1h2v2H9zM5 5h2v2H5zM9 5h2v2H9zM1 9h2v2H1zM5 9h2v2H5zM9 9h2v2H9z" fill="#bbb"/></svg>
  <div class="marker"></div>
</form>

<div class="stamp brand">O-MAP</div>
<div class="stamp caption">、设置输出文件路径和文件名</div>
</body>
</html>
```
FILE: styles.css
```css
* { box-sizing: border-box; }
body {
  margin: 0; min-height: 100vh; position: relative; overflow: hidden; background: #fafafa;
  font: 15px/20px "Noto Sans", "Noto Sans CJK SC", sans-serif; color: #000;
}
button, input, select { font: inherit; color: inherit; margin: 0; padding: 0; border: 0; background: none; border-radius: 0; }
select { appearance: none; width: 100%; height: 100%; outline: 0; }
input { outline: 0; min-width: 0; }
button { display: inline-flex; align-items: center; justify-content: center; }
ul { list-style: none; margin: 0; padding: 0; }
h2, p { margin: 0; font-weight: normal; }
svg { display: block; flex: none; }
.sprite { position: absolute; width: 0; height: 0; }
.roi-text { font: bold 10px "Liberation Sans", sans-serif; }
.i20 { width: 20px; height: 20px; }
.i16 { width: 16px; height: 16px; }
.i12 { width: 12px; height: 12px; }
.i8 { width: 9px; height: 9px; }
.grow { flex: 1; }
.flip { transform: rotate(180deg); }
.left { transform: rotate(90deg); }
.right { transform: rotate(-90deg); }

/* what shows around the main window */
.desktop { position: absolute; inset: 0; background: linear-gradient(#53a51c 0 11px, #f2f2f2 11px 60px, #fafafa 200px) no-repeat 0 0 / 10px 100%, #fafafa; border-top: 1px solid #6d7a5a; }
.peek { position: absolute; right: 0; top: 0; width: 10px; height: 445px; background: linear-gradient(#eee 0 20px, #5c4c4a 20px 39px, #f2f2f2 39px 100px, #4a4042 100px 131px, #fff 131px 175px, #5c4c4a 175px 194px, #fff 194px 218px, #3a6cc8 218px 223px, #f6f6f6 223px 273px, #5c4c4a 273px 288px, #eee 288px 330px, #5c4c4a 330px 350px, #fff 350px 378px, #3a6cc8 378px 384px, #fff 384px 437px, #5c4c4a 437px); }
.doodle { position: absolute; left: 800px; bottom: 0; width: 400px; height: 12px; }

/* main window */
.app { position: relative; z-index: 0; display: flex; flex-direction: column; margin: 0 10px 9px; min-height: calc(100vh - 9px); border-top: 1px solid #777; background: #efefef; box-shadow: 0 3px 10px rgba(0,0,0,.45); }
.titlebar { display: flex; align-items: center; gap: 5px; height: 37px; padding-left: 10px; background: #fff; color: #8a8a8a; }
.winbtns { margin-left: auto; display: flex; }
.winbtns button { width: 59px; height: 37px; color: #777; }
.winbtns svg { width: 14px; height: 14px; }
.menu { display: flex; gap: 18px; height: 24px; padding-left: 9px; background: #fff; line-height: 25px; }
.menu a { color: #777; text-decoration: none; }
.menu u { text-underline-offset: 2px; }

/* fixed-pitch interface text */
.bars, .layers, .toolbox, .status, .gram .fields, .gram .dfoot { font-family: "Noto Sans CJK SC", "Liberation Mono", monospace; font-feature-settings: "hwid"; }

.bars { height: 82px; padding: 4px 0 0 2px; }
.bar { display: grid; place-items: center; height: 37px; justify-content: start; }
.bar svg { width: 20px; height: 20px; }
.bar svg.wide { width: 24px; }
.bar1 { grid-template-columns: 28px 30px 26px 34px 26px 26px 29px 28px 30px 32px 26px 26px 124px 32px 26px 100px 36px 28px 38px 26px 38px 102px 142px 231px 36px 117px 28px 34px 26px; }
.bar2 { grid-template-columns: 25px 118px 29px 32px 34px 3px 29px 118px 29px 32px 33px 3px 65px 31px 156px 34px 35px 6px 29px 118px 29px 32px 34px 3px 28px 118px 29px 32px 34px 3px 37px 31px 88px; }
.bar hr { width: 1px; height: 20px; margin: 0; border: 0; background: #bbb; }
.active { width: 26px; height: 26px; background: #cce4f7; border: 2px solid #3a6da0; }
.drop { gap: 3px; }
.drop i, .cmds i { border: 5px solid transparent; border-top-color: #000; border-bottom: 0; margin-left: 4px; }
.drop.off { color: #8c8c8c; }
.drop.off i { border-top-color: #777; }
.combo { display: grid; align-items: center; border: 1px solid #7a7a7a; background: #fff; height: 25px; color: #000; }
.combo > * { grid-area: 1 / 1; }
.combo select { padding-left: 3px; }
.combo svg, .bar .combo svg { width: 12px; height: 12px; justify-self: end; margin-right: 5px; color: #666; pointer-events: none; }
.combo.grey { background: #e2e2e2; border-color: #adadad; }
.w-zoom { width: 121px; } .w-rot { width: 99px; } .w-goto { width: 225px; } .w-stretch { width: 151px; } .w-res { width: 158px; }
.name { width: 101px; height: 28px; background: #fff; border: 1px solid #7a7a7a; justify-self: end; margin-right: 2px; }
.num { width: 30px; height: 23px; padding-left: 3px; background: #fff; border: 1px solid #7a7a7a; }
.bar input[type=range] { appearance: none; width: 114px; height: 22px; background: linear-gradient(#8c8c8c, #8c8c8c) no-repeat 0 10px / 100% 2px; }
input[type=range]::-webkit-slider-thumb { appearance: none; width: 9px; height: 20px; background: #f2f2f2; border: 2px solid #7d7d7d; border-radius: 5px 5px 0 0; }
.group { display: flex; background: #fff; height: 26px; border-right: 1px solid #555; border-bottom: 1px solid #555; }
.group button { width: 27px; height: 25px; }
.two button:first-child { border-left: 2px solid #555; border-top: 2px solid #555; }
.three button + button { border-left: 1px solid #777; }

/* panels */
.work { flex: 1; display: grid; grid-template-columns: 432px 1fr 291px; padding: 0 10px 0 4px; }
.layers { display: flex; flex-direction: column; margin-top: 1px; }
.panelhead { display: flex; align-items: center; height: 23px; padding: 0 0 2px 31px; font-size: 15px; background: linear-gradient(#d4d4d4, #c2c2c2 40%, #cfcfcf); border-bottom: 1px solid #999; }
.panelhead svg { width: 20px; height: 20px; margin: 0 6px 0 auto; }
.updown { display: flex; gap: 14px; padding: 9px 5px 6px; }
.updown button { width: 16px; height: 16px; border: 1px solid #8a8a8a; background: #fff; }
.updown svg { width: 12px; height: 12px; }
.tree { flex: 1; background: #fff; border: 1px solid #777; overflow: hidden; white-space: nowrap; }
.tree li { position: relative; display: flex; align-items: center; height: 20px; }
.tree svg { width: 20px; height: 20px; margin: 0 5px 0 8px; }
.ex { width: 10px; height: 10px; flex: none; border: 1px solid #8c98a8; z-index: 1; background: linear-gradient(#2a4a80, #2a4a80) no-repeat center / 6px 1px, linear-gradient(#2a4a80, #2a4a80) no-repeat center / 1px 6px, #fff; }
.ex.minus { background: linear-gradient(#2a4a80, #2a4a80) no-repeat center / 6px 1px, #fff; }
.ex.none { border: 0; background: linear-gradient(90deg, transparent 50%, #aaa 50%) 0 50% / 2px 1px repeat-x; }
.layertree { margin-bottom: -1px; }
.layertree li { padding-left: 11px; }
.layertree li svg { margin-left: 9px; }
.layertree li.sub { padding-left: 35px; }
.layertree li.sub .ex { margin-right: 9px; }
.layertree label { display: flex; align-items: center; }
.layertree label svg, .layertree li.sub svg { margin: 0 5px 0 3px; }
.tooltree li { padding-left: 10px; }
.tooltree li::before, .layertree li.sub::before { content: ""; position: absolute; left: 15px; top: 0; height: 20px; border-left: 1px dotted #999; }
.layertree li.sub::before { left: 40px; }
.tree li.last::before { height: 10px; }
.tooltree li.leaf::before { left: 15px; }
.layertree input[type=checkbox], .dfoot input[type=checkbox] { appearance: none; width: 16px; height: 16px; border: 2px solid #444; background: #fff; display: grid; place-items: center; flex: none; }
input[type=checkbox]:checked::after { content: ""; width: 9px; height: 5px; border: solid #333; border-width: 0 0 2px 2px; transform: rotate(-48deg); margin-bottom: 3px; }
.tooltree li.leaf { padding-left: 80px; }
.tooltree li.sel { background: #0078d7; color: #fff; }
.map { margin: 0 8px 3px 10px; overflow: hidden; position: relative; background: #4d4447; }
.map svg { position: absolute; inset: 0; width: 100%; height: 100%; }
.toolbox { display: flex; flex-direction: column; margin-top: 1px; min-width: 0; }
.toolbox .panelhead { padding-left: 32px; }
.find { display: flex; padding: 7px 9px 3px 0; gap: 7px; }
.find input { flex: 1; height: 27px; background: #fff; border: 1px solid #7a7a7a; }
.find svg { width: 20px; height: 20px; }
.recent { height: 26px; line-height: 20px; border: solid #777; border-width: 1px 0; overflow: hidden; white-space: nowrap; margin: 1px 0 32px; text-indent: 9px; }
.tooltree { border-right: 0; border-bottom: 0; padding-top: 1px; margin-bottom: 3px; }
.status { display: grid; grid-template-columns: 494fr 494fr 495fr 173fr; gap: 6px; padding: 2px 5px 4px 4px; }
.status div { height: 29px; line-height: 20px; padding-left: 3px; border: 1px solid #8a8a8a; box-shadow: inset 0 0 0 1px #fff; white-space: nowrap; overflow: hidden; }
.tray svg { width: 40px; height: 20px; margin: 4px 0 0 auto; }

/* dialogs */
.dialog { position: absolute; background: #efefef; border: 1px solid #6f6f6f; box-shadow: 0 5px 14px rgba(0,0,0,.4); display: flex; flex-direction: column; }
.dtitle { display: flex; align-items: center; gap: 5px; height: 31px; background: #fff; padding: 0 14px 2px 4px; }
.x { margin-left: auto; }
.x svg { width: 13px; height: 13px; }
.gram { left: 257px; top: 150px; width: 517px; }
.gram .dtitle { color: #8e8e8e; }
.fields { display: grid; grid-template-columns: 220px 1fr; column-gap: 20px; grid-template-rows: 43px 43px 55px 42px 56px 43px 41px 41px; padding-top: 30px; }
.fields > label, .lab { text-align: right; line-height: 24px; }
.fields > label.two-line { line-height: 20px; }
.fields > label em { display: block; line-height: 14px; color: #8a8a8a; }
.pick { display: flex; gap: 2px; }
.pick button { width: 24px; height: 25px; margin-top: 1px; background: #e4e4e4; border: 1px solid #b0b0b0; font-weight: bold; }
.box { display: flex; align-items: center; width: 237px; height: 28px; padding-left: 15px; background: #fff; border: 1px solid #7f7f7f; border-right: 0; overflow: hidden; }
.box svg { width: 20px; height: 20px; margin-right: 5px; }
.box input { flex: 1; height: 24px; }
.dots { width: 14px; border-top: 1px dotted #888; }
.box.small { width: 80px; border-right: 1px solid #7f7f7f; }
.box.full { width: 238px; padding-left: 2px; border-right: 1px solid #7f7f7f; }
.radios { display: flex; height: 27px; }
.radios label { display: flex; align-items: center; gap: 3px; width: 66px; }
input[type=radio] { appearance: none; width: 16px; height: 16px; border: 1px solid #444; border-radius: 50%; background: #fff; }
input[type=radio]:checked { background: radial-gradient(circle, #222 0 4px, #fff 5px); }
.dfoot { display: flex; align-items: center; gap: 6px; padding: 20px 23px 14px 14px; }
.dfoot label { display: flex; align-items: center; gap: 5px; margin-left: 7px; }
.dfoot input[type=checkbox] { border: 1px solid #777; background: linear-gradient(135deg, #ddd, #fff); }
.help { width: 18px; height: 18px; border-radius: 50%; background: #2f55c4; color: #fff; font: bold 13px "Noto Sans", sans-serif; }
.help.blue { width: 20px; height: 20px; background: #0e62b4; }
.btn { height: 25px; background: #e3e3e3; border: 1px solid #adadad; }
.gram .btn { width: 64px; }

.saveas { left: 775px; top: 170px; width: 762px; border-color: #444; }
.saveas .dtitle { height: 35px; padding: 0 15px 1px 9px; }
.navrow { display: flex; align-items: center; height: 46px; padding: 0 15px 1px 8px; background: #fff; color: #666; }
.navrow > button { width: 32px; height: 30px; }
.navrow > .dim { width: 40px; color: #ccc; }
.navrow > .narrow { width: 20px; }
.address { display: flex; align-items: center; gap: 10px; width: 347px; flex: none; height: 30px; padding-left: 5px; border: 1px solid #d9d9d9; color: #222; }
.navrow > button:nth-child(4) { margin-right: 1px; }
.fold { width: 18px; height: 20px; }
.sep { color: #777; }
.address .narrow { width: 22px; }
.re { width: 27px; height: 28px; margin-left: -10px; border-left: 1px solid #ddd; }
.re svg { width: 15px; height: 15px; }
.search { flex: 1; min-width: 0; display: flex; align-items: center; height: 30px; margin-left: 14px; padding: 0 10px; border: 1px solid #d9d9d9; }
.search input { flex: 1; }
.search input::placeholder { color: #777; opacity: 1; }
.search svg { width: 16px; height: 16px; }
.cmds { display: flex; align-items: center; height: 39px; padding: 0 19px 1px 21px; background: #f4f5f7; border-bottom: 1px solid #e6e6e6; color: #1e395b; }
.cmds button + button { margin-left: 38px; }
.cmds .grow + button { margin-left: 0; }
.cmds i { border-top-color: #1e395b; margin-left: 7px; }
.vw { width: 20px; height: 18px; margin-right: 5px; }
.browse { display: grid; grid-template-columns: 276px 19px 1fr; height: 284px; background: #fff; }
.places { overflow: hidden; white-space: nowrap; color: #222; }
.places li { display: flex; align-items: center; gap: 6px; height: 30px; padding-left: 39px; }
.places svg { width: 20px; height: 20px; }
.cur { background: #d9d9d9; }
.vscroll { display: flex; flex-direction: column; align-items: center; background: #f0f0f0; color: #555; padding: 6px 0 5px; }
.vscroll .thumb { width: 19px; height: 69px; margin: 155px 0 auto; background: #cdcdcd; }
.files { display: flex; flex-direction: column; padding-left: 3px; }
.cols { display: grid; grid-template-columns: 149px 1fr 120px; height: 34px; padding-left: 24px; color: #44597a; }
.cols span { line-height: 34px; }
.cols svg { height: 9px; color: #888; }
.cols .date { border-left: 1px solid #e0e0e0; padding-left: 8px; }
.files p { margin: 20px 7px 0 0; text-align: center; font-size: 14px; color: #666; }
.hscroll { display: flex; align-items: center; height: 19px; margin-top: auto; margin-bottom: 2px; padding: 0 5px; background: #f0f0f0; color: #555; }
.hscroll .thumb { width: 244px; height: 19px; margin: 0 auto 0 8px; background: #cdcdcd; }
.names { display: grid; grid-template-columns: 149px 1fr; gap: 3px 6px; padding: 13px 6px 0 0; }
.names label { text-align: right; line-height: 31px; }
.names .combo { height: 31px; }
.names .combo.edit { border: 2px solid #2a82d0; grid-template-columns: auto 2px 1fr; }
.edit > input { grid-area: 1 / 1; field-sizing: content; padding-left: 3px; }
.edit > .caret { grid-area: 1 / 2; width: 1px; height: 20px; background: #000; }
.edit > svg { grid-area: 1 / 3; }
.sfoot { display: flex; gap: 18px; padding: 23px 23px 12px 15px; }
.saveas .btn { width: 107px; height: 30px; }
.saveas .primary { border: 2px solid #1177cf; }
.hide { gap: 9px; height: 34px; padding-top: 2px; color: #222; }
.grip { position: absolute; right: 2px; bottom: 2px; width: 12px; height: 12px; }
.marker { position: absolute; left: 56px; top: 388px; width: 299px; height: 71px; border: 4px solid #dd2a24; border-radius: 5px; pointer-events: none; }

/* red captions over everything */
.stamp { position: absolute; color: #fb1010; font-weight: bold; white-space: nowrap; pointer-events: none; }
.brand { left: 31px; top: 20px; font-family: "DejaVu Sans", sans-serif; font-size: 35px; line-height: 40px; }
.caption { right: 19px; bottom: 9px; font-family: "Noto Sans CJK SC", sans-serif; font-size: 42px; line-height: 54px; color: #e81512; }
```
